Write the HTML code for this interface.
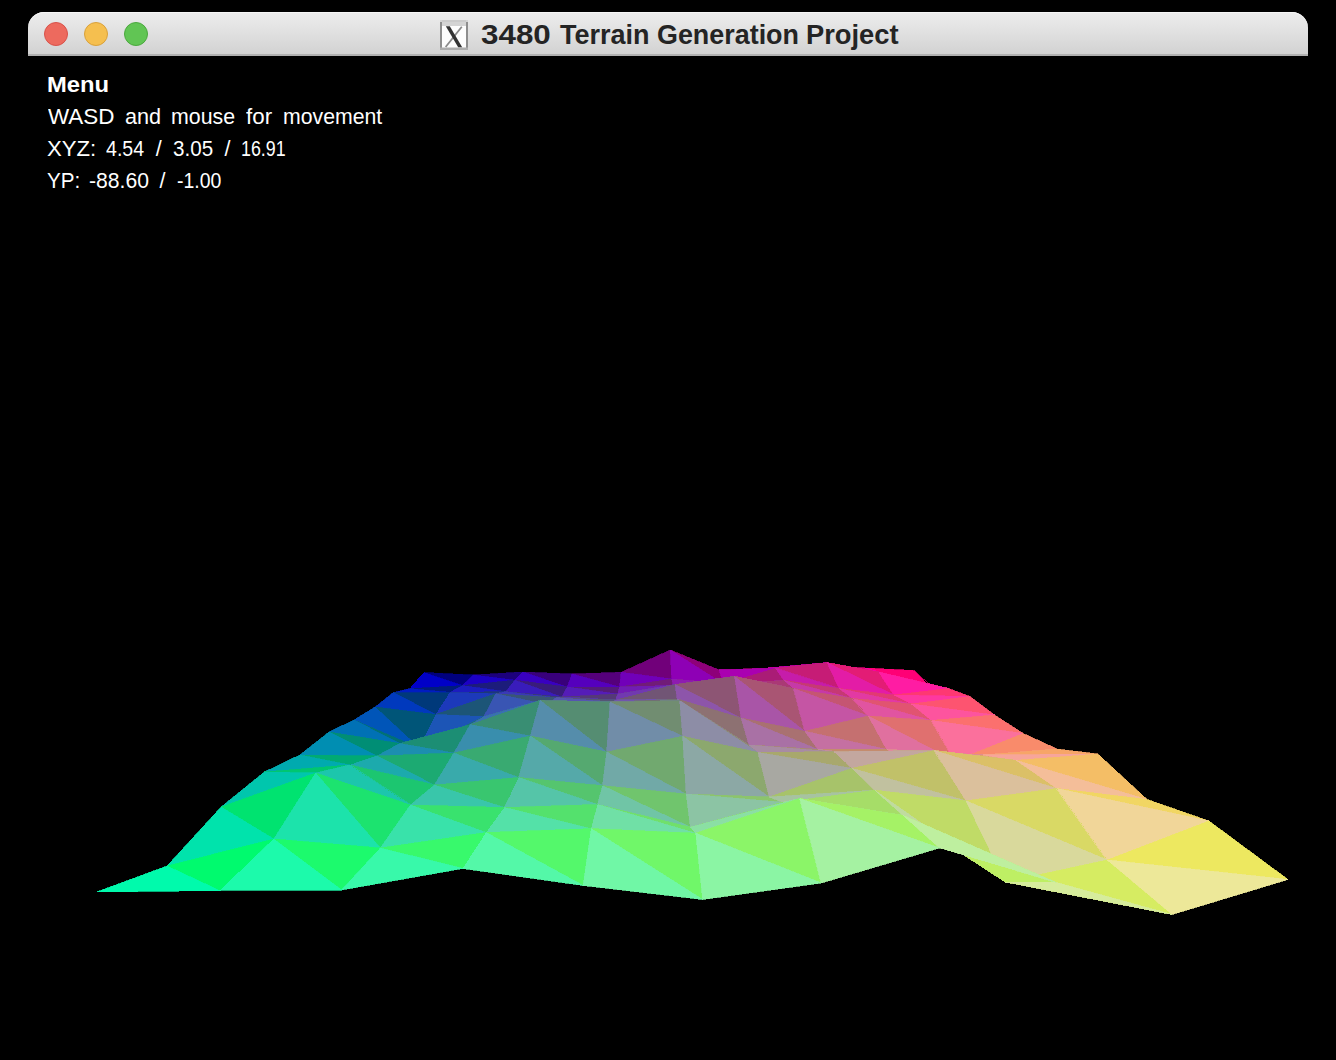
<!DOCTYPE html>
<html><head><meta charset="utf-8"><title>3480 Terrain Generation Project</title>
<style>
html,body{margin:0;padding:0;background:#000;}
body{width:1336px;height:1060px;overflow:hidden;position:relative;font-family:"Liberation Sans",sans-serif;}
#tb{position:absolute;left:28px;top:12px;width:1280px;height:44px;border-radius:16px 16px 0 0;
 background:linear-gradient(#ececec 0%,#e4e4e4 35%,#d5d5d5 90%,#d2d2d2 100%);box-sizing:border-box;border-bottom:2px solid #b1b1b1;box-shadow:inset 0 1px 0 #f6f6f6;}
.tl{position:absolute;top:10px;width:24px;height:24px;border-radius:50%;box-sizing:border-box;}
#r{left:16px;background:#ed6a5e;border:1px solid #d8524a;}
#y{left:56px;background:#f5bf4f;border:1px solid #d9a13b;}
#g{left:96px;background:#61c554;border:1px solid #4ba83e;}
#ico{position:absolute;left:440px;top:20px;}
.tw{position:absolute;top:20px;font-weight:bold;font-size:27px;line-height:30px;color:#242424;white-space:nowrap;transform-origin:0 0;display:block;}
.w{position:absolute;color:#fff;font-size:23px;line-height:32px;white-space:nowrap;transform-origin:0 0;display:block;}
</style></head><body>
<div id="tb"><div class="tl" id="r"></div><div class="tl" id="y"></div><div class="tl" id="g"></div></div>
<svg id="ico" width="28" height="30" viewBox="0 0 28 30"><rect x="0" y="0" width="28" height="30" fill="#fdfdfd"/><rect x="0" y="0" width="28" height="6" fill="#d4d4d4"/><rect x="2" y="0" width="24" height="2" fill="#cbcbcb"/><rect x="0" y="2" width="2" height="28" fill="#8e8e8e"/><rect x="26" y="2" width="2" height="28" fill="#8e8e8e"/><rect x="0" y="27.5" width="28" height="2.5" fill="#adadad"/><path d="M21.8 6.8 L5.6 27" stroke="#8a8a8a" stroke-width="1.8" fill="none"/><path d="M5.8 6.3 L9.8 6.3 L22.2 27.2 L18.2 27.2 Z" fill="#333"/></svg>
<span class="w" style="left:46.9px;top:69px;transform:scaleX(1.058);font-size:22.5px;font-weight:bold;">Menu</span>
<span class="w" style="left:48.0px;top:101px;transform:scaleX(1.044);font-size:21.5px;">WASD</span>
<span class="w" style="left:124.8px;top:101px;transform:scaleX(1.006);font-size:21.5px;">and</span>
<span class="w" style="left:170.5px;top:101px;transform:scaleX(0.992);font-size:21.5px;">mouse</span>
<span class="w" style="left:246.0px;top:101px;transform:scaleX(1.040);font-size:21.5px;">for</span>
<span class="w" style="left:282.6px;top:101px;transform:scaleX(0.988);font-size:21.5px;">movement</span>
<span class="w" style="left:47.0px;top:133px;transform:scaleX(1.031);font-size:21.5px;">XYZ:</span>
<span class="w" style="left:105.6px;top:133px;transform:scaleX(0.910);font-size:21.5px;">4.54</span>
<span class="w" style="left:155.8px;top:133px;transform:scaleX(1.000);font-size:21.5px;">/</span>
<span class="w" style="left:172.7px;top:133px;transform:scaleX(0.958);font-size:21.5px;">3.05</span>
<span class="w" style="left:224.5px;top:133px;transform:scaleX(1.000);font-size:21.5px;">/</span>
<span class="w" style="left:240.9px;top:133px;transform:scaleX(0.829);font-size:21.5px;">16.91</span>
<span class="w" style="left:47.0px;top:165px;transform:scaleX(0.959);font-size:21.5px;">YP:</span>
<span class="w" style="left:89.0px;top:165px;transform:scaleX(0.983);font-size:21.5px;">-88.60</span>
<span class="w" style="left:159.5px;top:165px;transform:scaleX(1.000);font-size:21.5px;">/</span>
<span class="w" style="left:176.6px;top:165px;transform:scaleX(0.904);font-size:21.5px;">-1.00</span>
<span class="tw" style="left:481.4px;transform:scaleX(1.162);">3480</span>
<span class="tw" style="left:560.0px;transform:scaleX(1.000);">Terrain</span>
<span class="tw" style="left:657.2px;transform:scaleX(0.996);">Generation</span>
<span class="tw" style="left:805.7px;transform:scaleX(1.011);">Project</span>
<svg id="ter" width="1336" height="1060" viewBox="0 0 1336 1060" style="position:absolute;left:0;top:0" shape-rendering="crispEdges">
<polygon points="865.1,668.0 929.9,686.0 913.5,670.5" fill="#ff0076" stroke="#ff0076" stroke-width="0.7"/>
<polygon points="816.6,665.0 878.7,672.0 865.1,668.0" fill="#e30077" stroke="#e30077" stroke-width="0.7"/>
<polygon points="768.0,668.0 827.2,662.6 816.6,665.0" fill="#c60077" stroke="#c60077" stroke-width="0.7"/>
<polygon points="719.2,670.0 775.5,668.3 768.0,668.0" fill="#aa0078" stroke="#aa0078" stroke-width="0.7"/>
<polygon points="670.3,650.0 723.7,684.0 719.2,670.0" fill="#8e0079" stroke="#8e0079" stroke-width="0.7"/>
<polygon points="621.2,672.3 671.7,679.0 670.3,650.0" fill="#71007a" stroke="#71007a" stroke-width="0.7"/>
<polygon points="572.0,674.0 619.6,687.0 621.2,672.3" fill="#55007b" stroke="#55007b" stroke-width="0.7"/>
<polygon points="522.7,672.0 567.3,687.0 572.0,674.0" fill="#39007b" stroke="#39007b" stroke-width="0.7"/>
<polygon points="473.2,675.0 514.8,680.2 522.7,672.0" fill="#1c007c" stroke="#1c007c" stroke-width="0.7"/>
<polygon points="423.6,672.5 462.3,685.6 473.2,675.0" fill="#00007d" stroke="#00007d" stroke-width="0.7"/>
<polygon points="878.7,672.0 929.9,686.0 865.1,668.0" fill="#ff00a6" stroke="#ff00a6" stroke-width="0.7"/>
<polygon points="827.2,662.6 878.7,672.0 816.6,665.0" fill="#e300aa" stroke="#e300aa" stroke-width="0.7"/>
<polygon points="775.5,668.3 827.2,662.6 768.0,668.0" fill="#c600ad" stroke="#c600ad" stroke-width="0.7"/>
<polygon points="723.7,684.0 775.5,668.3 719.2,670.0" fill="#aa00b1" stroke="#aa00b1" stroke-width="0.7"/>
<polygon points="671.7,679.0 723.7,684.0 670.3,650.0" fill="#8e00b5" stroke="#8e00b5" stroke-width="0.7"/>
<polygon points="619.6,687.0 671.7,679.0 621.2,672.3" fill="#7100b9" stroke="#7100b9" stroke-width="0.7"/>
<polygon points="567.3,687.0 619.6,687.0 572.0,674.0" fill="#5500bd" stroke="#5500bd" stroke-width="0.7"/>
<polygon points="514.8,680.2 567.3,687.0 522.7,672.0" fill="#3900c0" stroke="#3900c0" stroke-width="0.7"/>
<polygon points="462.3,685.6 514.8,680.2 473.2,675.0" fill="#1c00c4" stroke="#1c00c4" stroke-width="0.7"/>
<polygon points="409.5,688.7 462.3,685.6 423.6,672.5" fill="#0000c8" stroke="#0000c8" stroke-width="0.7"/>
<polygon points="878.7,672.0 948.7,688.5 929.9,686.0" fill="#ff1c74" stroke="#ff1c74" stroke-width="0.7"/>
<polygon points="827.2,662.6 893.9,695.0 878.7,672.0" fill="#e31c75" stroke="#e31c75" stroke-width="0.7"/>
<polygon points="775.5,668.3 839.1,688.5 827.2,662.6" fill="#c61c76" stroke="#c61c76" stroke-width="0.7"/>
<polygon points="723.7,684.0 784.0,680.4 775.5,668.3" fill="#aa1c76" stroke="#aa1c76" stroke-width="0.7"/>
<polygon points="671.7,679.0 728.7,684.0 723.7,684.0" fill="#8e1c77" stroke="#8e1c77" stroke-width="0.7"/>
<polygon points="619.6,687.0 673.3,685.5 671.7,679.0" fill="#711c78" stroke="#711c78" stroke-width="0.7"/>
<polygon points="567.3,687.0 617.7,694.0 619.6,687.0" fill="#551c79" stroke="#551c79" stroke-width="0.7"/>
<polygon points="514.8,680.2 561.9,697.0 567.3,687.0" fill="#391c7a" stroke="#391c7a" stroke-width="0.7"/>
<polygon points="462.3,685.6 505.9,691.7 514.8,680.2" fill="#1c1c7b" stroke="#1c1c7b" stroke-width="0.7"/>
<polygon points="409.5,688.7 449.8,692.5 462.3,685.6" fill="#001c7b" stroke="#001c7b" stroke-width="0.7"/>
<polygon points="893.9,695.0 948.7,688.5 878.7,672.0" fill="#ff1ca3" stroke="#ff1ca3" stroke-width="0.7"/>
<polygon points="839.1,688.5 893.9,695.0 827.2,662.6" fill="#e31ca6" stroke="#e31ca6" stroke-width="0.7"/>
<polygon points="784.0,680.4 839.1,688.5 775.5,668.3" fill="#c61caa" stroke="#c61caa" stroke-width="0.7"/>
<polygon points="728.7,684.0 784.0,680.4 723.7,684.0" fill="#aa1cad" stroke="#aa1cad" stroke-width="0.7"/>
<polygon points="673.3,685.5 728.7,684.0 671.7,679.0" fill="#8e1cb1" stroke="#8e1cb1" stroke-width="0.7"/>
<polygon points="617.7,694.0 673.3,685.5 619.6,687.0" fill="#711cb4" stroke="#711cb4" stroke-width="0.7"/>
<polygon points="561.9,697.0 617.7,694.0 567.3,687.0" fill="#551cb8" stroke="#551cb8" stroke-width="0.7"/>
<polygon points="505.9,691.7 561.9,697.0 514.8,680.2" fill="#391cbb" stroke="#391cbb" stroke-width="0.7"/>
<polygon points="449.8,692.5 505.9,691.7 462.3,685.6" fill="#1c1cbf" stroke="#1c1cbf" stroke-width="0.7"/>
<polygon points="393.4,692.5 449.8,692.5 409.5,688.7" fill="#001cc2" stroke="#001cc2" stroke-width="0.7"/>
<polygon points="893.9,695.0 970.0,696.5 948.7,688.5" fill="#fe3872" stroke="#fe3872" stroke-width="0.7"/>
<polygon points="839.1,688.5 911.4,704.0 893.9,695.0" fill="#e23973" stroke="#e23973" stroke-width="0.7"/>
<polygon points="784.0,680.4 852.7,698.5 839.1,688.5" fill="#c63974" stroke="#c63974" stroke-width="0.7"/>
<polygon points="728.7,684.0 793.7,688.5 784.0,680.4" fill="#aa3975" stroke="#aa3975" stroke-width="0.7"/>
<polygon points="673.3,685.5 734.6,676.4 728.7,684.0" fill="#8e3976" stroke="#8e3976" stroke-width="0.7"/>
<polygon points="617.7,694.0 675.1,684.5 673.3,685.5" fill="#713976" stroke="#713976" stroke-width="0.7"/>
<polygon points="561.9,697.0 615.5,700.0 617.7,694.0" fill="#553977" stroke="#553977" stroke-width="0.7"/>
<polygon points="505.9,691.7 555.7,697.7 561.9,697.0" fill="#393978" stroke="#393978" stroke-width="0.7"/>
<polygon points="449.8,692.5 495.7,693.7 505.9,691.7" fill="#1c3979" stroke="#1c3979" stroke-width="0.7"/>
<polygon points="393.4,692.5 435.6,714.5 449.8,692.5" fill="#00397a" stroke="#00397a" stroke-width="0.7"/>
<polygon points="911.4,704.0 970.0,696.5 893.9,695.0" fill="#fe38a0" stroke="#fe38a0" stroke-width="0.7"/>
<polygon points="852.7,698.5 911.4,704.0 839.1,688.5" fill="#e239a3" stroke="#e239a3" stroke-width="0.7"/>
<polygon points="793.7,688.5 852.7,698.5 784.0,680.4" fill="#c639a7" stroke="#c639a7" stroke-width="0.7"/>
<polygon points="734.6,676.4 793.7,688.5 728.7,684.0" fill="#aa39aa" stroke="#aa39aa" stroke-width="0.7"/>
<polygon points="675.1,684.5 734.6,676.4 673.3,685.5" fill="#8e39ad" stroke="#8e39ad" stroke-width="0.7"/>
<polygon points="615.5,700.0 675.1,684.5 617.7,694.0" fill="#7139b0" stroke="#7139b0" stroke-width="0.7"/>
<polygon points="555.7,697.7 615.5,700.0 561.9,697.0" fill="#5539b3" stroke="#5539b3" stroke-width="0.7"/>
<polygon points="495.7,693.7 555.7,697.7 505.9,691.7" fill="#3939b7" stroke="#3939b7" stroke-width="0.7"/>
<polygon points="435.6,714.5 495.7,693.7 449.8,692.5" fill="#1c39ba" stroke="#1c39ba" stroke-width="0.7"/>
<polygon points="375.1,707.0 435.6,714.5 393.4,692.5" fill="#0039bd" stroke="#0039bd" stroke-width="0.7"/>
<polygon points="911.4,704.0 994.6,715.0 970.0,696.5" fill="#fd5470" stroke="#fd5470" stroke-width="0.7"/>
<polygon points="852.7,698.5 931.6,720.5 911.4,704.0" fill="#e15471" stroke="#e15471" stroke-width="0.7"/>
<polygon points="793.7,688.5 868.4,716.0 852.7,698.5" fill="#c55572" stroke="#c55572" stroke-width="0.7"/>
<polygon points="734.6,676.4 804.9,731.3 793.7,688.5" fill="#a95573" stroke="#a95573" stroke-width="0.7"/>
<polygon points="675.1,684.5 741.2,718.0 734.6,676.4" fill="#8d5574" stroke="#8d5574" stroke-width="0.7"/>
<polygon points="615.5,700.0 677.3,699.0 675.1,684.5" fill="#715575" stroke="#715575" stroke-width="0.7"/>
<polygon points="555.7,697.7 613.0,702.0 615.5,700.0" fill="#555575" stroke="#555575" stroke-width="0.7"/>
<polygon points="495.7,693.7 548.6,705.0 555.7,697.7" fill="#395576" stroke="#395576" stroke-width="0.7"/>
<polygon points="435.6,714.5 483.9,716.6 495.7,693.7" fill="#1c5577" stroke="#1c5577" stroke-width="0.7"/>
<polygon points="375.1,707.0 419.2,748.0 435.6,714.5" fill="#005578" stroke="#005578" stroke-width="0.7"/>
<polygon points="931.6,720.5 994.6,715.0 911.4,704.0" fill="#fd549e" stroke="#fd549e" stroke-width="0.7"/>
<polygon points="868.4,716.0 931.6,720.5 852.7,698.5" fill="#e154a1" stroke="#e154a1" stroke-width="0.7"/>
<polygon points="804.9,731.3 868.4,716.0 793.7,688.5" fill="#c555a4" stroke="#c555a4" stroke-width="0.7"/>
<polygon points="741.2,718.0 804.9,731.3 734.6,676.4" fill="#a955a7" stroke="#a955a7" stroke-width="0.7"/>
<polygon points="677.3,699.0 741.2,718.0 675.1,684.5" fill="#8d55aa" stroke="#8d55aa" stroke-width="0.7"/>
<polygon points="613.0,702.0 677.3,699.0 615.5,700.0" fill="#7155ad" stroke="#7155ad" stroke-width="0.7"/>
<polygon points="548.6,705.0 613.0,702.0 555.7,697.7" fill="#5555b0" stroke="#5555b0" stroke-width="0.7"/>
<polygon points="483.9,716.6 548.6,705.0 495.7,693.7" fill="#3955b3" stroke="#3955b3" stroke-width="0.7"/>
<polygon points="419.2,748.0 483.9,716.6 435.6,714.5" fill="#1c55b6" stroke="#1c55b6" stroke-width="0.7"/>
<polygon points="353.9,720.0 419.2,748.0 375.1,707.0" fill="#0055b8" stroke="#0055b8" stroke-width="0.7"/>
<polygon points="931.6,720.5 1023.3,733.5 994.6,715.0" fill="#fb706e" stroke="#fb706e" stroke-width="0.7"/>
<polygon points="868.4,716.0 955.0,761.0 931.6,720.5" fill="#e0706f" stroke="#e0706f" stroke-width="0.7"/>
<polygon points="804.9,731.3 886.6,749.4 868.4,716.0" fill="#c57070" stroke="#c57070" stroke-width="0.7"/>
<polygon points="741.2,718.0 817.9,749.4 804.9,731.3" fill="#a97171" stroke="#a97171" stroke-width="0.7"/>
<polygon points="677.3,699.0 749.0,745.0 741.2,718.0" fill="#8d7172" stroke="#8d7172" stroke-width="0.7"/>
<polygon points="613.0,702.0 679.7,700.6 677.3,699.0" fill="#717173" stroke="#717173" stroke-width="0.7"/>
<polygon points="548.6,705.0 610.1,702.0 613.0,702.0" fill="#557174" stroke="#557174" stroke-width="0.7"/>
<polygon points="483.9,716.6 540.2,700.4 548.6,705.0" fill="#397175" stroke="#397175" stroke-width="0.7"/>
<polygon points="419.2,748.0 470.2,724.7 483.9,716.6" fill="#1c7176" stroke="#1c7176" stroke-width="0.7"/>
<polygon points="353.9,720.0 399.8,743.5 419.2,748.0" fill="#007176" stroke="#007176" stroke-width="0.7"/>
<polygon points="955.0,761.0 1023.3,733.5 931.6,720.5" fill="#fb709c" stroke="#fb709c" stroke-width="0.7"/>
<polygon points="886.6,749.4 955.0,761.0 868.4,716.0" fill="#e0709f" stroke="#e0709f" stroke-width="0.7"/>
<polygon points="817.9,749.4 886.6,749.4 804.9,731.3" fill="#c570a2" stroke="#c570a2" stroke-width="0.7"/>
<polygon points="749.0,745.0 817.9,749.4 741.2,718.0" fill="#a971a5" stroke="#a971a5" stroke-width="0.7"/>
<polygon points="679.7,700.6 749.0,745.0 677.3,699.0" fill="#8d71a8" stroke="#8d71a8" stroke-width="0.7"/>
<polygon points="610.1,702.0 679.7,700.6 613.0,702.0" fill="#7171aa" stroke="#7171aa" stroke-width="0.7"/>
<polygon points="540.2,700.4 610.1,702.0 548.6,705.0" fill="#5571ad" stroke="#5571ad" stroke-width="0.7"/>
<polygon points="470.2,724.7 540.2,700.4 483.9,716.6" fill="#3971b0" stroke="#3971b0" stroke-width="0.7"/>
<polygon points="399.8,743.5 470.2,724.7 419.2,748.0" fill="#1c71b2" stroke="#1c71b2" stroke-width="0.7"/>
<polygon points="329.0,732.0 399.8,743.5 353.9,720.0" fill="#0071b5" stroke="#0071b5" stroke-width="0.7"/>
<polygon points="955.0,761.0 1057.2,749.0 1023.3,733.5" fill="#f98b6b" stroke="#f98b6b" stroke-width="0.7"/>
<polygon points="886.6,749.4 982.9,755.0 955.0,761.0" fill="#df8b6c" stroke="#df8b6c" stroke-width="0.7"/>
<polygon points="817.9,749.4 908.3,760.0 886.6,749.4" fill="#c48c6e" stroke="#c48c6e" stroke-width="0.7"/>
<polygon points="749.0,745.0 833.5,751.7 817.9,749.4" fill="#a88c6f" stroke="#a88c6f" stroke-width="0.7"/>
<polygon points="679.7,700.6 758.2,752.5 749.0,745.0" fill="#8d8d70" stroke="#8d8d70" stroke-width="0.7"/>
<polygon points="610.1,702.0 682.7,736.3 679.7,700.6" fill="#718d71" stroke="#718d71" stroke-width="0.7"/>
<polygon points="540.2,700.4 606.7,752.0 610.1,702.0" fill="#558d72" stroke="#558d72" stroke-width="0.7"/>
<polygon points="470.2,724.7 530.4,736.0 540.2,700.4" fill="#398e73" stroke="#398e73" stroke-width="0.7"/>
<polygon points="399.8,743.5 453.9,753.0 470.2,724.7" fill="#1c8e74" stroke="#1c8e74" stroke-width="0.7"/>
<polygon points="329.0,732.0 377.0,756.0 399.8,743.5" fill="#008e75" stroke="#008e75" stroke-width="0.7"/>
<polygon points="982.9,755.0 1057.2,749.0 955.0,761.0" fill="#f98b9b" stroke="#f98b9b" stroke-width="0.7"/>
<polygon points="908.3,760.0 982.9,755.0 886.6,749.4" fill="#df8b9e" stroke="#df8b9e" stroke-width="0.7"/>
<polygon points="833.5,751.7 908.3,760.0 817.9,749.4" fill="#c48ca0" stroke="#c48ca0" stroke-width="0.7"/>
<polygon points="758.2,752.5 833.5,751.7 749.0,745.0" fill="#a88ca3" stroke="#a88ca3" stroke-width="0.7"/>
<polygon points="682.7,736.3 758.2,752.5 679.7,700.6" fill="#8d8da6" stroke="#8d8da6" stroke-width="0.7"/>
<polygon points="606.7,752.0 682.7,736.3 610.1,702.0" fill="#718da8" stroke="#718da8" stroke-width="0.7"/>
<polygon points="530.4,736.0 606.7,752.0 540.2,700.4" fill="#558dab" stroke="#558dab" stroke-width="0.7"/>
<polygon points="453.9,753.0 530.4,736.0 470.2,724.7" fill="#398ead" stroke="#398ead" stroke-width="0.7"/>
<polygon points="377.0,756.0 453.9,753.0 399.8,743.5" fill="#1c8eaf" stroke="#1c8eaf" stroke-width="0.7"/>
<polygon points="299.7,755.0 377.0,756.0 329.0,732.0" fill="#008eb2" stroke="#008eb2" stroke-width="0.7"/>
<polygon points="982.9,755.0 1097.9,754.0 1057.2,749.0" fill="#f7a568" stroke="#f7a568" stroke-width="0.7"/>
<polygon points="908.3,760.0 1016.3,760.4 982.9,755.0" fill="#dda66a" stroke="#dda66a" stroke-width="0.7"/>
<polygon points="833.5,751.7 934.4,750.5 908.3,760.0" fill="#c3a76b" stroke="#c3a76b" stroke-width="0.7"/>
<polygon points="758.2,752.5 852.0,768.3 833.5,751.7" fill="#a8a86d" stroke="#a8a86d" stroke-width="0.7"/>
<polygon points="682.7,736.3 769.2,797.0 758.2,752.5" fill="#8ca86e" stroke="#8ca86e" stroke-width="0.7"/>
<polygon points="606.7,752.0 686.2,794.0 682.7,736.3" fill="#71a96f" stroke="#71a96f" stroke-width="0.7"/>
<polygon points="530.4,736.0 602.6,785.7 606.7,752.0" fill="#55a970" stroke="#55a970" stroke-width="0.7"/>
<polygon points="453.9,753.0 518.7,777.5 530.4,736.0" fill="#39aa71" stroke="#39aa71" stroke-width="0.7"/>
<polygon points="377.0,756.0 434.4,785.0 453.9,753.0" fill="#1caa72" stroke="#1caa72" stroke-width="0.7"/>
<polygon points="299.7,755.0 349.5,765.0 377.0,756.0" fill="#00aa73" stroke="#00aa73" stroke-width="0.7"/>
<polygon points="1016.3,760.4 1097.9,754.0 982.9,755.0" fill="#f7a59a" stroke="#f7a59a" stroke-width="0.7"/>
<polygon points="934.4,750.5 1016.3,760.4 908.3,760.0" fill="#dda69d" stroke="#dda69d" stroke-width="0.7"/>
<polygon points="852.0,768.3 934.4,750.5 833.5,751.7" fill="#c3a79f" stroke="#c3a79f" stroke-width="0.7"/>
<polygon points="769.2,797.0 852.0,768.3 758.2,752.5" fill="#a8a8a2" stroke="#a8a8a2" stroke-width="0.7"/>
<polygon points="686.2,794.0 769.2,797.0 682.7,736.3" fill="#8ca8a5" stroke="#8ca8a5" stroke-width="0.7"/>
<polygon points="602.6,785.7 686.2,794.0 606.7,752.0" fill="#71a9a7" stroke="#71a9a7" stroke-width="0.7"/>
<polygon points="518.7,777.5 602.6,785.7 530.4,736.0" fill="#55a9a9" stroke="#55a9a9" stroke-width="0.7"/>
<polygon points="434.4,785.0 518.7,777.5 453.9,753.0" fill="#39aaab" stroke="#39aaab" stroke-width="0.7"/>
<polygon points="349.5,765.0 434.4,785.0 377.0,756.0" fill="#1caaad" stroke="#1caaad" stroke-width="0.7"/>
<polygon points="264.3,772.0 349.5,765.0 299.7,755.0" fill="#00aaaf" stroke="#00aaaf" stroke-width="0.7"/>
<polygon points="1016.3,760.4 1147.2,799.5 1097.9,754.0" fill="#f4be66" stroke="#f4be66" stroke-width="0.7"/>
<polygon points="934.4,750.5 1056.9,788.5 1016.3,760.4" fill="#dbc067" stroke="#dbc067" stroke-width="0.7"/>
<polygon points="852.0,768.3 966.0,800.8 934.4,750.5" fill="#c1c169" stroke="#c1c169" stroke-width="0.7"/>
<polygon points="769.2,797.0 874.7,790.2 852.0,768.3" fill="#a7c36a" stroke="#a7c36a" stroke-width="0.7"/>
<polygon points="686.2,794.0 782.8,802.3 769.2,797.0" fill="#8cc46c" stroke="#8cc46c" stroke-width="0.7"/>
<polygon points="602.6,785.7 690.4,827.2 686.2,794.0" fill="#70c56d" stroke="#70c56d" stroke-width="0.7"/>
<polygon points="518.7,777.5 597.6,804.5 602.6,785.7" fill="#55c56e" stroke="#55c56e" stroke-width="0.7"/>
<polygon points="434.4,785.0 504.3,807.5 518.7,777.5" fill="#39c66f" stroke="#39c66f" stroke-width="0.7"/>
<polygon points="349.5,765.0 410.4,805.0 434.4,785.0" fill="#1cc670" stroke="#1cc670" stroke-width="0.7"/>
<polygon points="264.3,772.0 315.7,773.0 349.5,765.0" fill="#00c671" stroke="#00c671" stroke-width="0.7"/>
<polygon points="1056.9,788.5 1147.2,799.5 1016.3,760.4" fill="#f4be99" stroke="#f4be99" stroke-width="0.7"/>
<polygon points="966.0,800.8 1056.9,788.5 934.4,750.5" fill="#dbc09c" stroke="#dbc09c" stroke-width="0.7"/>
<polygon points="874.7,790.2 966.0,800.8 852.0,768.3" fill="#c1c19f" stroke="#c1c19f" stroke-width="0.7"/>
<polygon points="782.8,802.3 874.7,790.2 769.2,797.0" fill="#a7c3a1" stroke="#a7c3a1" stroke-width="0.7"/>
<polygon points="690.4,827.2 782.8,802.3 686.2,794.0" fill="#8cc4a4" stroke="#8cc4a4" stroke-width="0.7"/>
<polygon points="597.6,804.5 690.4,827.2 602.6,785.7" fill="#70c5a6" stroke="#70c5a6" stroke-width="0.7"/>
<polygon points="504.3,807.5 597.6,804.5 518.7,777.5" fill="#55c5a8" stroke="#55c5a8" stroke-width="0.7"/>
<polygon points="410.4,805.0 504.3,807.5 434.4,785.0" fill="#39c6aa" stroke="#39c6aa" stroke-width="0.7"/>
<polygon points="315.7,773.0 410.4,805.0 349.5,765.0" fill="#1cc6ac" stroke="#1cc6ac" stroke-width="0.7"/>
<polygon points="221.1,807.0 315.7,773.0 264.3,772.0" fill="#00c6ad" stroke="#00c6ad" stroke-width="0.7"/>
<polygon points="1056.9,788.5 1209.0,821.0 1147.2,799.5" fill="#f1d663" stroke="#f1d663" stroke-width="0.7"/>
<polygon points="966.0,800.8 1107.3,860.0 1056.9,788.5" fill="#d9d965" stroke="#d9d965" stroke-width="0.7"/>
<polygon points="874.7,790.2 1005.2,882.0 966.0,800.8" fill="#c0db67" stroke="#c0db67" stroke-width="0.7"/>
<polygon points="782.8,802.3 903.0,815.4 874.7,790.2" fill="#a6dd68" stroke="#a6dd68" stroke-width="0.7"/>
<polygon points="690.4,827.2 799.8,798.5 782.8,802.3" fill="#8bdf6a" stroke="#8bdf6a" stroke-width="0.7"/>
<polygon points="597.6,804.5 695.8,833.2 690.4,827.2" fill="#70e06b" stroke="#70e06b" stroke-width="0.7"/>
<polygon points="504.3,807.5 591.3,828.7 597.6,804.5" fill="#54e16d" stroke="#54e16d" stroke-width="0.7"/>
<polygon points="410.4,805.0 486.1,832.5 504.3,807.5" fill="#39e26e" stroke="#39e26e" stroke-width="0.7"/>
<polygon points="315.7,773.0 380.4,848.0 410.4,805.0" fill="#1ce36f" stroke="#1ce36f" stroke-width="0.7"/>
<polygon points="221.1,807.0 273.8,839.0 315.7,773.0" fill="#00e370" stroke="#00e370" stroke-width="0.7"/>
<polygon points="1107.3,860.0 1209.0,821.0 1056.9,788.5" fill="#f1d699" stroke="#f1d699" stroke-width="0.7"/>
<polygon points="1005.2,882.0 1107.3,860.0 966.0,800.8" fill="#d9d99c" stroke="#d9d99c" stroke-width="0.7"/>
<polygon points="903.0,815.4 1005.2,882.0 874.7,790.2" fill="#c0db9f" stroke="#c0db9f" stroke-width="0.7"/>
<polygon points="799.8,798.5 903.0,815.4 782.8,802.3" fill="#a6dda1" stroke="#a6dda1" stroke-width="0.7"/>
<polygon points="695.8,833.2 799.8,798.5 690.4,827.2" fill="#8bdfa4" stroke="#8bdfa4" stroke-width="0.7"/>
<polygon points="591.3,828.7 695.8,833.2 597.6,804.5" fill="#70e0a6" stroke="#70e0a6" stroke-width="0.7"/>
<polygon points="486.1,832.5 591.3,828.7 504.3,807.5" fill="#54e1a8" stroke="#54e1a8" stroke-width="0.7"/>
<polygon points="380.4,848.0 486.1,832.5 410.4,805.0" fill="#39e2aa" stroke="#39e2aa" stroke-width="0.7"/>
<polygon points="273.8,839.0 380.4,848.0 315.7,773.0" fill="#1ce3ab" stroke="#1ce3ab" stroke-width="0.7"/>
<polygon points="167.0,866.0 273.8,839.0 221.1,807.0" fill="#00e3ac" stroke="#00e3ac" stroke-width="0.7"/>
<polygon points="1107.3,860.0 1288.0,879.5 1209.0,821.0" fill="#ede860" stroke="#ede860" stroke-width="0.7"/>
<polygon points="1005.2,882.0 1172.2,914.5 1107.3,860.0" fill="#d6ec62" stroke="#d6ec62" stroke-width="0.7"/>
<polygon points="903.0,815.4 1056.3,882.5 1005.2,882.0" fill="#beef64" stroke="#beef64" stroke-width="0.7"/>
<polygon points="799.8,798.5 939.5,848.0 903.0,815.4" fill="#a5f266" stroke="#a5f266" stroke-width="0.7"/>
<polygon points="695.8,833.2 821.4,883.0 799.8,798.5" fill="#8bf568" stroke="#8bf568" stroke-width="0.7"/>
<polygon points="591.3,828.7 702.7,899.5 695.8,833.2" fill="#70f769" stroke="#70f769" stroke-width="0.7"/>
<polygon points="486.1,832.5 583.2,885.5 591.3,828.7" fill="#54f86b" stroke="#54f86b" stroke-width="0.7"/>
<polygon points="380.4,848.0 462.7,868.5 486.1,832.5" fill="#38f96c" stroke="#38f96c" stroke-width="0.7"/>
<polygon points="273.8,839.0 341.6,890.0 380.4,848.0" fill="#1cfa6d" stroke="#1cfa6d" stroke-width="0.7"/>
<polygon points="167.0,866.0 219.5,890.5 273.8,839.0" fill="#00fa6e" stroke="#00fa6e" stroke-width="0.7"/>
<polygon points="1172.2,914.5 1288.0,879.5 1107.3,860.0" fill="#ede899" stroke="#ede899" stroke-width="0.7"/>
<polygon points="1056.3,882.5 1172.2,914.5 1005.2,882.0" fill="#d6ec9c" stroke="#d6ec9c" stroke-width="0.7"/>
<polygon points="939.5,848.0 1056.3,882.5 903.0,815.4" fill="#beef9f" stroke="#beef9f" stroke-width="0.7"/>
<polygon points="821.4,883.0 939.5,848.0 799.8,798.5" fill="#a5f2a2" stroke="#a5f2a2" stroke-width="0.7"/>
<polygon points="702.7,899.5 821.4,883.0 695.8,833.2" fill="#8bf5a4" stroke="#8bf5a4" stroke-width="0.7"/>
<polygon points="583.2,885.5 702.7,899.5 591.3,828.7" fill="#70f7a6" stroke="#70f7a6" stroke-width="0.7"/>
<polygon points="462.7,868.5 583.2,885.5 486.1,832.5" fill="#54f8a8" stroke="#54f8a8" stroke-width="0.7"/>
<polygon points="341.6,890.0 462.7,868.5 380.4,848.0" fill="#38f9aa" stroke="#38f9aa" stroke-width="0.7"/>
<polygon points="219.5,890.5 341.6,890.0 273.8,839.0" fill="#1cfaab" stroke="#1cfaab" stroke-width="0.7"/>
<polygon points="96.6,892.0 219.5,890.5 167.0,866.0" fill="#00faac" stroke="#00faac" stroke-width="0.7"/>
</svg>
</body></html>
